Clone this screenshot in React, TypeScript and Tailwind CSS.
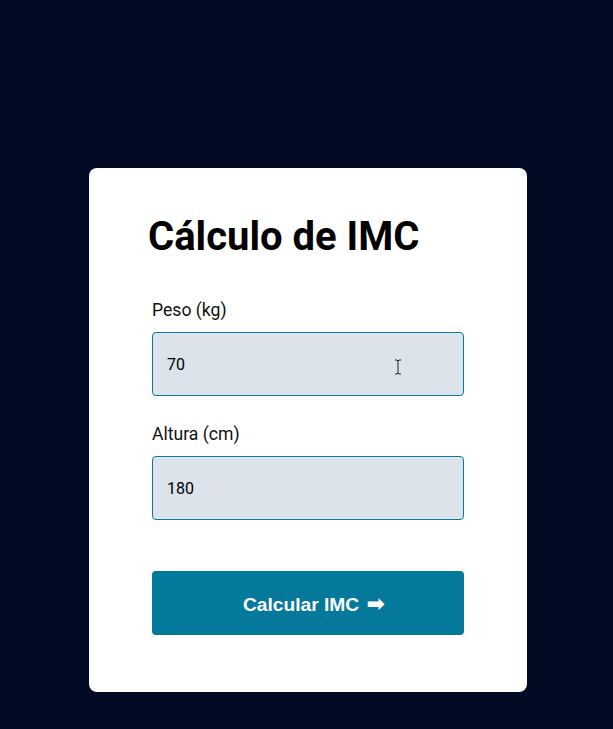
import { useState } from "react";

export default function App() {
  const [peso, setPeso] = useState("70");
  const [altura, setAltura] = useState("180");

  return (
    <div className="min-h-[729px] w-full bg-[#020a24] pt-[168px] font-['Roboto',sans-serif]">
      <div className="ml-[89px] w-[438px] rounded-lg bg-white px-[63px] pt-[45px] pb-[57px]">
        {/* Title */}
        <h1 className="-ml-1 text-[40px] leading-[48px] font-bold text-black">
          Cálculo de IMC
        </h1>

        <form className="mt-[37px] flex flex-col" onSubmit={(e) => e.preventDefault()}>
          <label className="text-[17.6px] leading-6 text-[#111]">Peso (kg)</label>
          <div className="relative mt-[10px]">
            <input
              value={peso}
              onChange={(e) => setPeso(e.target.value)}
              className="h-16 w-full rounded border border-[#0b7a9c] bg-[#dce3ea] px-[14px] text-base text-black outline-none"
            />
            {/* mouse cursor */}
            <svg
              className="pointer-events-none absolute left-[242px] top-[27px]"
              width="8"
              height="16"
              viewBox="0 0 8 16"
            >
              <path d="M1 1h2l1 1 1-1h2M4 2v12M1 15h2l1-1 1 1h2" stroke="#222" strokeWidth="1" fill="none" />
            </svg>
          </div>

          <label className="mt-[26px] text-[17.6px] leading-6 text-[#111]">Altura (cm)</label>
          <input
            value={altura}
            onChange={(e) => setAltura(e.target.value)}
            className="mt-[10px] h-16 w-full rounded border border-[#0b7a9c] bg-[#dce3ea] px-[14px] text-base text-black outline-none"
          />

          <button
            type="submit"
            className="mt-[51px] h-16 w-full rounded bg-[#05799c] pl-3 font-['Liberation_Sans',Arial,sans-serif] text-[19.2px] font-bold text-white"
          >
            Calcular IMC{" "}
            <span className="ml-0.5 font-['DejaVu_Sans',sans-serif] text-[22px]">➡</span>
          </button>
        </form>
      </div>
    </div>
  );
}
